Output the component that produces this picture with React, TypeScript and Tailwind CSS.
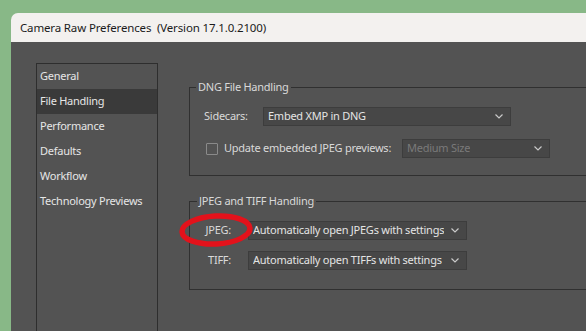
import React from "react";

const font = { fontFamily: '"Noto Sans", "Open Sans", sans-serif' };

function Chevron() {
  return (
    <svg width="8" height="5" viewBox="0 0 8 5" className="shrink-0">
      <path d="M0.5 0.5 L4 4 L7.5 0.5" fill="none" stroke="#c9c9c9" strokeWidth="1.2" />
    </svg>
  );
}

function Select({ value, width, disabled }: { value: string; width: string; disabled?: boolean }) {
  return (
    <div
      className={`${width} h-[19px] flex items-center justify-between pl-[4px] pr-[7px] border border-[#3d3d3d] bg-[#474747] whitespace-nowrap ${
        disabled ? "text-[#7a7a7a]" : "text-[#e4e4e4]"
      }`}
    >
      <span className="truncate">{value}</span>
      <Chevron />
    </div>
  );
}

const items = ["General", "File Handling", "Performance", "Defaults", "Workflow", "Technology Previews"];

export default function App() {
  return (
    <div
      className="w-[586px] h-[331px] overflow-hidden bg-[#88b887] pt-[13px] pl-[11px] text-[11px] tracking-[-0.25px]"
      style={font}
    >
      <div className="w-[600px] h-[330px] flex flex-col rounded-tl-[7px] overflow-hidden">
        {/* title bar */}
        <div className="h-[29px] shrink-0 bg-[#f3f1ef] flex items-center pl-[9px] text-[11.5px] tracking-[-0.15px] text-[#1b1b1b] whitespace-nowrap">
          Camera Raw Preferences&nbsp;&nbsp;(Version 17.1.0.2100)
        </div>

        {/* body */}
        <div className="flex-1 bg-[#535353] flex pt-[21px] pl-[25px]">
          <div className="w-[122px] h-[300px] border border-[#2e2e2e] flex flex-col">
            {items.map((it) => (
              <div
                key={it}
                className={`h-[25px] flex items-center pl-[3px] text-[#e6e6e6] whitespace-nowrap ${
                  it === "File Handling" ? "bg-[#3a3a3a]" : ""
                }`}
              >
                {it}
              </div>
            ))}
          </div>

          <div className="ml-[31px] flex-1 flex flex-col text-[#d9d9d9]">
            <fieldset className="mt-[16px] h-[97px] border border-[#303030] flex flex-col">
              <legend className="ml-[6px] px-[2px] leading-[16px]">DNG File Handling</legend>
              <div className="mt-[12px] pl-[14px] flex items-center">
                <span className="w-[59px]">Sidecars:</span>
                <Select value="Embed XMP in DNG" width="w-[248px]" />
              </div>
              <div className="mt-[13px] pl-[16px] flex items-center">
                <span className="w-[12px] h-[12px] border border-[#8a8a8a] rounded-[1px]" />
                <span className="ml-[6px] w-[178px] whitespace-nowrap">Update embedded JPEG previews:</span>
                <Select value="Medium Size" width="w-[148px]" disabled />
              </div>
            </fieldset>

            <fieldset className="mt-[17px] h-[97px] border border-[#303030] flex flex-col">
              <legend className="ml-[7px] px-[2px] leading-[16px]">JPEG and TIFF Handling</legend>
              <div className="mt-[12px] flex items-center">
                <span className="relative w-[41px] text-right">
                  JPEG:
                  <svg
                    width="80"
                    height="38"
                    viewBox="0 0 80 38"
                    className="absolute left-[-13px] top-[-11px] pointer-events-none"
                  >
                    <ellipse
                      cx="39"
                      cy="19"
                      rx="34"
                      ry="14"
                      fill="none"
                      stroke="#e3121b"
                      strokeWidth="5.5"
                      transform="rotate(-3 39 19)"
                    />
                  </svg>
                </span>
                <span className="ml-[17px]">
                  <Select value="Automatically open JPEGs with settings" width="w-[219px]" />
                </span>
              </div>
              <div className="mt-[11px] flex items-center">
                <span className="w-[41px] text-right">TIFF:</span>
                <span className="ml-[17px]">
                  <Select value="Automatically open TIFFs with settings" width="w-[219px]" />
                </span>
              </div>
            </fieldset>
          </div>
        </div>
      </div>
    </div>
  );
}
